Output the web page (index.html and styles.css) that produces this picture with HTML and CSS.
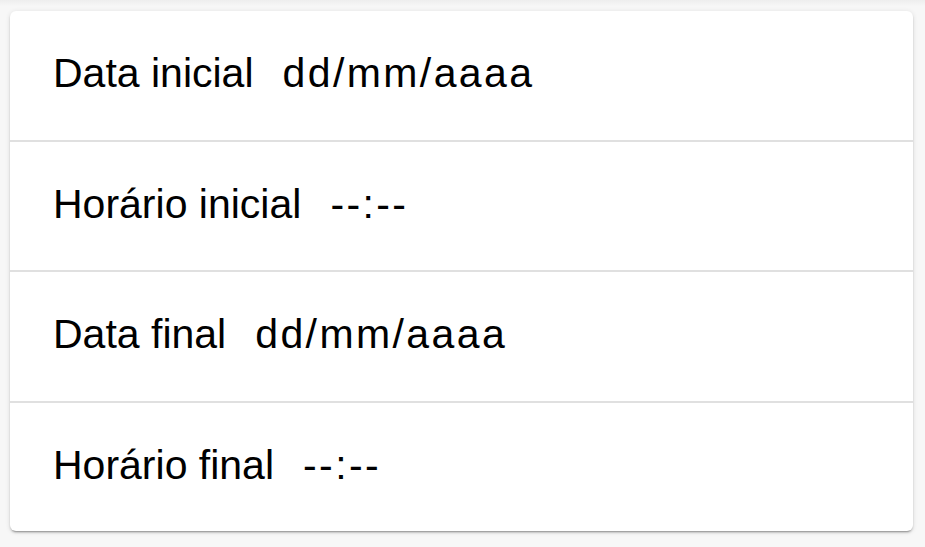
FILE: index.html
```html
<!DOCTYPE html>
<html lang="pt-BR">
<head>
<meta charset="utf-8">
<title>Período</title>
<link rel="stylesheet" href="styles.css">
</head>
<body>
  <div class="topbar-shadow"></div>
  <main class="card">
    <div class="row"><span class="label">Data inicial</span><span class="value">dd/mm/aaaa</span></div>
    <div class="row"><span class="label">Horário inicial</span><span class="value">--:--</span></div>
    <div class="row"><span class="label">Data final</span><span class="value">dd/mm/aaaa</span></div>
    <div class="row"><span class="label">Horário final</span><span class="value">--:--</span></div>
  </main>
</body>
</html>
```
FILE: styles.css
```css
html, body {
  margin: 0;
  padding: 0;
}
body {
  background: #f7f7f7;
  font-family: "Liberation Sans", Arial, sans-serif;
  color: #000;
  min-height: 547px;
}
.topbar-shadow {
  height: 6px;
  background: linear-gradient(#eeeeee, #f7f7f7);
}
.card {
  margin: 5px 12px 0 10px;
  background: #fff;
  border-radius: 6px;
  box-shadow: 0 3px 1px -2px rgba(0,0,0,.2), 0 2px 2px 0 rgba(0,0,0,.14), 0 1px 5px 0 rgba(0,0,0,.12);
  display: flex;
  flex-direction: column;
}
.row {
  height: 125.5px;
  padding: 0 0 3px 43px;
  box-sizing: content-box;
  display: flex;
  align-items: center;
  font-size: 41px;
  line-height: 47px;
  border-top: 2px solid #e0e0e0;
}
.row:first-child {
  border-top: none;
}
.label,
.value {
  display: block;
}
.value {
  margin-left: 29px;
  letter-spacing: 2.4px;
}
```
